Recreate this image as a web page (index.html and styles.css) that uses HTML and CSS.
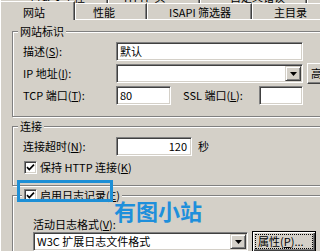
FILE: index.html
```html
<!DOCTYPE html>
<html lang="zh-CN">
<head>
  <meta charset="utf-8">
  <title>网站属性</title>
  <link rel="stylesheet" href="styles.css">
</head>
<body>
  <div class="dialog">
    <div class="tabrow tabrow-back">
      <div class="tab tab-dirsec">目录安全性</div>
      <div class="tab tab-http">HTTP 头</div>
      <div class="tab tab-errors">自定义错误</div>
      <div class="tab tab-ext">服务器扩展</div>
    </div>
    <div class="tabrow tabrow-front">
      <div class="tab tab-site active">网站</div>
      <div class="tab tab-perf">性能</div>
      <div class="tab tab-isapi">ISAPI 筛选器</div>
      <div class="tab tab-home">主目录</div>
    </div>

    <div class="panel">
      <!-- 网站标识 -->
      <fieldset class="group group-id">
        <legend>网站标识</legend>
        <div class="row">
          <span class="lbl">描述(<u>S</u>):</span>
          <span class="field field-desc">默认</span>
        </div>
        <div class="row">
          <span class="lbl">IP 地址(<u>I</u>):</span>
          <span class="field combo combo-ip">
            <span class="combo-text"></span>
            <span class="combo-arrow"><svg width="7" height="4" viewBox="0 0 7 4"><polygon points="0,0 7,0 3.5,4" fill="#000"/></svg></span>
          </span>
          <span class="btn btn-adv">高级(<u>D</u>)...</span>
        </div>
        <div class="row">
          <span class="lbl">TCP 端口(<u>T</u>):</span>
          <span class="field field-tcp">80</span>
          <span class="lbl lbl-ssl">SSL 端口(<u>L</u>):</span>
          <span class="field field-ssl"></span>
        </div>
      </fieldset>

      <!-- 连接 -->
      <fieldset class="group group-conn">
        <legend>连接</legend>
        <div class="row">
          <span class="lbl">连接超时(<u>N</u>):</span>
          <span class="field field-timeout">120</span>
          <span class="unit">秒</span>
        </div>
        <div class="checkrow">
          <span class="check"><svg width="9" height="9" viewBox="0 0 9 9"><path d="M1 4.2l2.3 2.3L8 1.6" fill="none" stroke="#000" stroke-width="1.7"/></svg></span>
          <span>保持 HTTP 连接(<u>K</u>)</span>
        </div>
      </fieldset>

      <!-- 日志 -->
      <fieldset class="group group-log">
        <legend class="checkrow">
          <span class="check"><svg width="9" height="9" viewBox="0 0 9 9"><path d="M1 4.2l2.3 2.3L8 1.6" fill="none" stroke="#000" stroke-width="1.7"/></svg></span>
          <span>启用日志记录(<u>E</u>)</span>
        </legend>
        <div class="caption">活动日志格式(<u>V</u>):</div>
        <div class="row row-log">
          <span class="field combo combo-log">
            <span class="combo-text">W3C 扩展日志文件格式</span>
            <span class="combo-arrow"><svg width="7" height="4" viewBox="0 0 7 4"><polygon points="0,0 7,0 3.5,4" fill="#000"/></svg></span>
          </span>
          <span class="btn btn-default"><span class="focus">属性(<u>P</u>)...</span></span>
        </div>
      </fieldset>
    </div>
  </div>

  <!-- watermark over the screenshot -->
  <div class="stamp-box"></div>
  <div class="stamp-text">有图小站</div>
</body>
</html>
```

FILE: styles.css
```css
body {
  margin: 0;
  width: 320px;
  height: 251px;
  overflow: hidden;
  position: relative;
  background-color: #d4d0c8;
  color: #000;
  font-family: "Noto Sans CJK SC", sans-serif;
  font-size: 11px;
  line-height: 13px;
}

u {
  text-decoration: underline;
}

.dialog {
  width: 420px;
}

/* tabs */
.tabrow {
  display: flex;
}

.tab {
  box-sizing: border-box;
  flex: none;
  white-space: nowrap;
  background-color: #d4d0c8;
  border-top: 1px solid #fff;
  border-left: 1px solid #fff;
  border-right: 1px solid #404040;
  box-shadow: inset -1px 0 0 #808080;
}

.tabrow-back {
  margin-top: -15px;
}

.tabrow-back .tab {
  height: 18px;
  padding-top: 5px;
}

.tab-dirsec { width: 108px; padding-left: 29px; }
.tab-http { width: 92px; padding-left: 15px; }
.tab-errors { width: 107px; padding-left: 29px; }
.tab-ext { width: 110px; padding-left: 28px; }

.tabrow-front .tab {
  height: 16px;
  padding-top: 2px;
}

.tab-site { width: 75px; padding-left: 22px; }
.tab-perf { width: 72px; padding-left: 17px; }
.tab-isapi { width: 105px; padding-left: 21px; }
.tab-home { width: 80px; padding-left: 21px; }

.tabrow-front .tab.active {
  position: relative;
  z-index: 1;
  height: 19px;
  margin-top: -2px;
  margin-bottom: -1px;
  padding-top: 4px;
}

/* panel */
.panel {
  border-top: 1px solid #fff;
  border-left: 1px solid #fff;
  padding-left: 11px;
  height: 240px;
}

.group {
  margin: 5px 0 0 0;
  padding: 4px 0 11px 10px;
  width: 400px;
  border: 1px solid #808080;
  box-shadow: inset 1px 1px 0 #fff, 1px 1px 0 #fff;
  min-width: 0;
}

.group legend {
  margin-left: -5px;
  padding: 0 2px;
  line-height: 13px;
  background-color: #d4d0c8;
}

.group-conn,
.group-log {
  margin-top: 3px;
}

.group-log {
  padding-left: 20px;
}

.group-log legend {
  margin-left: -11px;
}

.row {
  display: flex;
  align-items: center;
  height: 19px;
  margin-bottom: 3px;
}

.row:last-child {
  margin-bottom: 0;
}

.lbl {
  width: 93px;
  flex: none;
  white-space: nowrap;
}

.lbl-ssl {
  width: 76px;
  margin-left: 12px;
}

/* sunken edit boxes */
.field {
  box-sizing: border-box;
  flex: none;
  height: 19px;
  padding: 2px 3px 0;
  background-color: #fff;
  border: 1px solid;
  border-color: #808080 #fff #fff #808080;
  box-shadow: inset 1px 1px 0 #404040, inset -1px -1px 0 #d4d0c8;
  white-space: nowrap;
}

.field-desc { width: 187px; }
.field-tcp { width: 55px; }
.field-ssl { width: 44px; }

.field-timeout {
  width: 76px;
  text-align: right;
  padding-right: 4px;
}

.unit {
  margin-left: 6px;
}

.combo {
  display: flex;
  padding: 0;
}

.combo-ip { width: 187px; }
.combo-log { width: 215px; }

.combo-text {
  flex: 1;
  padding: 2px 0 0 3px;
}

.combo-arrow {
  box-sizing: border-box;
  width: 16px;
  height: 15px;
  margin: 1px 1px 0 0;
  display: flex;
  align-items: center;
  justify-content: center;
  background-color: #d4d0c8;
  border: 1px solid;
  border-color: #d4d0c8 #404040 #404040 #d4d0c8;
  box-shadow: inset 1px 1px 0 #fff, inset -1px -1px 0 #808080;
}

/* buttons */
.btn {
  box-sizing: border-box;
  flex: none;
  display: flex;
  align-items: center;
  height: 21px;
  white-space: nowrap;
  border: 1px solid;
  border-color: #fff #404040 #404040 #fff;
  box-shadow: inset -1px -1px 0 #808080;
}

.btn-adv {
  width: 75px;
  margin-left: 4px;
  padding-left: 3px;
}

.btn-default {
  width: 64px;
  margin-left: 4px;
  padding: 2px;
  border-color: #000;
  box-shadow: inset 1px 1px 0 #fff, inset -1px -1px 0 #404040, inset -2px -2px 0 #808080;
}

.focus {
  box-sizing: border-box;
  width: 100%;
  height: 15px;
  padding-left: 2px;
  border: 1px dotted #000;
  line-height: 13px;
}

/* checkboxes */
.checkrow {
  display: flex;
  align-items: center;
  height: 13px;
  margin-top: 5px;
  margin-left: 1px;
}

.group-log legend.checkrow {
  margin-top: 0;
  height: 13px;
}

.check {
  box-sizing: border-box;
  width: 13px;
  height: 13px;
  margin-right: 3px;
  display: flex;
  align-items: center;
  justify-content: center;
  background-color: #fff;
  border: 1px solid;
  border-color: #808080 #fff #fff #808080;
  box-shadow: inset 1px 1px 0 #404040, inset -1px -1px 0 #d4d0c8;
}

.caption {
  padding-top: 12px;
}

.row-log {
  margin-top: 1px;
}

/* watermark */
.stamp-box {
  position: absolute;
  left: 17px;
  top: 180px;
  width: 96px;
  height: 22px;
  box-sizing: border-box;
  border: 3px solid #1d8fd6;
}

.stamp-text {
  position: absolute;
  left: 114px;
  top: 197px;
  font-size: 22px;
  line-height: 26px;
  font-weight: bold;
  color: #1e8fdb;
}
```
